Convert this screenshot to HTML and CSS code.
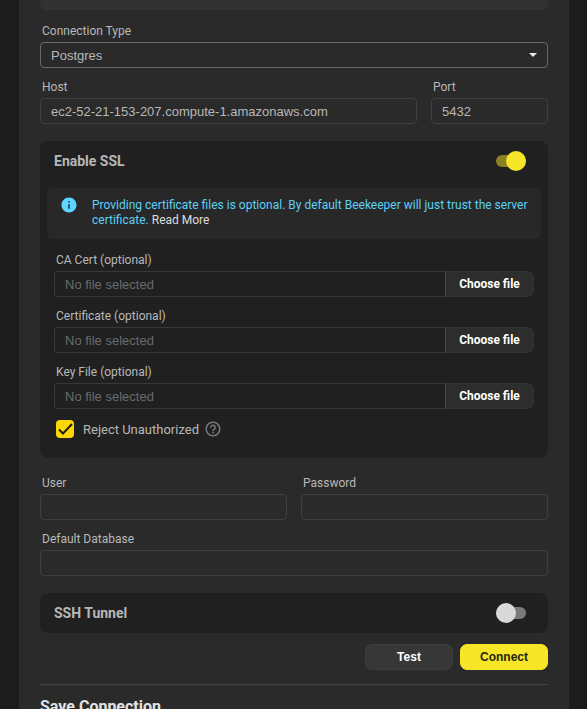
FILE: index.html
```html
<!DOCTYPE html>
<html lang="en">
<head>
<meta charset="utf-8">
<meta name="viewport" content="width=device-width, initial-scale=1">
<title>Connection</title>
<link rel="stylesheet" href="styles.css">
</head>
<body>
<main class="panel">
  <div class="notice"></div>
  <form class="form">
    <div class="field">
      <label for="type">Connection Type</label>
      <div class="select">
        <select id="type" class="control"><option>Postgres</option></select>
      </div>
    </div>
    <div class="row row-host">
      <div class="field">
        <label for="host">Host</label>
        <input id="host" class="control" type="text" value="ec2-52-21-153-207.compute-1.amazonaws.com">
      </div>
      <div class="field">
        <label for="port">Port</label>
        <input id="port" class="control" type="text" value="5432">
      </div>
    </div>

    <section class="group">
      <div class="group-head">
        <label for="ssl">Enable SSL</label>
        <input id="ssl" class="switch" type="checkbox" checked>
      </div>
      <div class="alert">
        <svg class="alert-icon" viewBox="0 0 24 24" aria-hidden="true"><path d="M12 2C6.48 2 2 6.48 2 12s4.480 10 10 10 10-4.480 10-10S17.520 2 12 2zm1 15h-2v-6h2v6zm0-8h-2V7h2v2z"/></svg>
        <p>Providing certificate files is optional. By default Beekeeper will just trust the server certificate. <a href="#">Read More</a></p>
      </div>
      <div class="group-body">
        <div class="files">
          <div class="field">
            <label for="ca">CA Cert (optional)</label>
            <div class="file">
              <input id="ca" class="control" type="text" placeholder="No file selected" readonly>
              <button type="button">Choose file</button>
            </div>
          </div>
          <div class="field">
            <label for="cert">Certificate (optional)</label>
            <div class="file">
              <input id="cert" class="control" type="text" placeholder="No file selected" readonly>
              <button type="button">Choose file</button>
            </div>
          </div>
          <div class="field">
            <label for="key">Key File (optional)</label>
            <div class="file">
              <input id="key" class="control" type="text" placeholder="No file selected" readonly>
              <button type="button">Choose file</button>
            </div>
          </div>
        </div>
        <div class="check">
          <span class="tick">
            <input id="reject" type="checkbox" checked>
            <svg viewBox="0 0 18 18" aria-hidden="true"><path d="M3 9.500L7 13.500L16 4"/></svg>
          </span>
          <label for="reject">Reject Unauthorized</label>
          <svg class="help" viewBox="0 0 24 24" aria-hidden="true"><path d="M11 18h2v-2h-2v2zm1-16C6.480 2 2 6.480 2 12s4.480 10 10 10 10-4.480 10-10S17.520 2 12 2zm0 18c-4.410 0-8-3.590-8-8s3.590-8 8-8 8 3.590 8 8-3.590 8-8 8zm0-14c-2.210 0-4 1.790-4 4h2c0-1.100.9-2 2-2s2 .9 2 2c0 2-3 1.750-3 5h2c0-2.250 3-2.500 3-5 0-2.210-1.790-4-4-4z"/></svg>
        </div>
      </div>
    </section>

    <div class="row">
      <div class="field">
        <label for="user">User</label>
        <input id="user" class="control" type="text">
      </div>
      <div class="field">
        <label for="password">Password</label>
        <input id="password" class="control" type="password">
      </div>
    </div>
    <div class="field">
      <label for="database">Default Database</label>
      <input id="database" class="control" type="text">
    </div>

    <section class="group">
      <div class="group-head">
        <label for="ssh">SSH Tunnel</label>
        <input id="ssh" class="switch" type="checkbox">
      </div>
    </section>
  </form>
  <div class="actions">
    <button type="button" class="btn">Test</button>
    <button type="button" class="btn btn-primary">Connect</button>
  </div>
  <hr>
  <h3>Save Connection</h3>
</main>
</body>
</html>
```
FILE: styles.css
```css
* {
  box-sizing: border-box;
}

html {
  height: 100%;
  overflow: hidden;
}

body {
  margin: 0;
  padding: 0 18px 0 19px;
  background: #1c1c1c;
  color: #b8b8b8;
  font-family: Roboto, "Liberation Sans", sans-serif;
  font-size: 12px;
}

.panel {
  max-width: 720px;
  margin: 0 auto;
  padding: 0 21px 24px;
  background: #2a2a2a;
}

.notice {
  height: 10px;
  margin-bottom: 14px;
  border-radius: 0 0 7px 7px;
  background: #323232;
}

.form,
.files {
  display: flex;
  flex-direction: column;
  gap: 12px;
}

.field {
  display: flex;
  flex-direction: column;
  flex: 1;
  min-width: 0;
}

.field > label {
  height: 18px;
  padding-left: 2px;
  line-height: 14px;
}

.row {
  display: grid;
  grid-template-columns: 1fr 1fr;
  gap: 14px;
}

.row-host {
  grid-template-columns: 377fr 117fr;
}

.control {
  width: 100%;
  height: 26px;
  margin: 0;
  padding: 0 10px;
  border: 1px solid #3f3f3f;
  border-radius: 4px;
  outline: 0;
  background: transparent;
  color: #b8b8b8;
  font-family: "Liberation Sans", Arial, sans-serif;
  font-size: 13px;
}

.control::placeholder {
  color: #6b6b6b;
  opacity: 1;
}

.select {
  position: relative;
}

.select .control {
  display: block;
  appearance: none;
  border-color: #6a6a6a;
}

.select::after {
  content: "";
  position: absolute;
  top: 11px;
  right: 11px;
  border: 4px solid transparent;
  border-top-color: #eaeaea;
  border-bottom: 0;
  pointer-events: none;
}

.group {
  margin: 5px 0 6px;
  border-radius: 8px;
  background: #202020;
}

.group:last-child {
  margin-bottom: 0;
}

.group-head {
  display: flex;
  align-items: center;
  justify-content: space-between;
  height: 40px;
  padding: 0 22px 0 14px;
  font-size: 14px;
  font-weight: 700;
}

.switch {
  appearance: none;
  display: flex;
  align-items: center;
  width: 30px;
  height: 12px;
  margin: 0;
  border-radius: 6px;
  background: #7a7a7a;
}

.switch::before {
  content: "";
  flex: none;
  width: 20px;
  height: 20px;
  border-radius: 50%;
  background: #d9d9d9;
}

.switch:checked {
  justify-content: flex-end;
  background: #8b8224;
}

.switch:checked::before {
  background: #f7e528;
}

.alert {
  display: flex;
  gap: 14px;
  margin: 7px 7px 14px;
  padding: 8px 10px 11px 13px;
  border-radius: 6px;
  background: #282828;
  color: #5cd0f7;
}

.alert-icon {
  flex: none;
  width: 18px;
  height: 18px;
  fill: #5cd5ff;
}

.alert p {
  margin: 2px 0 0;
  line-height: 15px;
}

.alert a {
  color: #dedede;
  text-decoration: none;
}

.group-body {
  padding: 0 14px 20px;
}

.file {
  display: flex;
}

.file .control {
  flex: 1;
  min-width: 0;
  border-color: #383838;
  border-right: 0;
  border-radius: 4px 0 0 4px;
}

.file button {
  width: 89px;
  height: 26px;
  padding: 0;
  border: 1px solid #333333;
  border-left-color: #484848;
  border-radius: 0 7px 7px 0;
  background: #2d2d2d;
  color: #ffffff;
  font: 700 12px Roboto, "Liberation Sans", sans-serif;
}

.check {
  display: flex;
  align-items: center;
  height: 18px;
  margin-top: 11px;
  padding-left: 2px;
  font-size: 13px;
}

.tick {
  display: grid;
  width: 18px;
  height: 18px;
  margin-right: 9px;
}

.tick input,
.tick svg {
  grid-area: 1 / 1;
  width: 18px;
  height: 18px;
  margin: 0;
}

.tick input {
  appearance: none;
  border-radius: 4px;
  background: #fad800;
}

.tick svg {
  fill: none;
  stroke: #202020;
  stroke-width: 2;
  pointer-events: none;
}

.help {
  width: 18px;
  height: 18px;
  margin-left: 5px;
  fill: #797979;
}

.actions {
  display: flex;
  justify-content: flex-end;
  gap: 7px;
  margin-top: 11px;
}

.btn {
  width: 88px;
  height: 26px;
  padding: 0;
  border: 1px solid #3d3d3d;
  border-radius: 7px;
  background: #373737;
  color: #ffffff;
  font: 700 12px "Liberation Sans", Arial, sans-serif;
}

.btn-primary {
  border-color: #f7e528;
  background: #f7e528;
  color: #28260f;
}

hr {
  height: 1px;
  margin: 14px 0 12px;
  border: 0;
  background: #434343;
}

h3 {
  margin: 0;
  color: #e2e2e2;
  font-size: 16px;
  font-weight: 700;
  line-height: 20px;
}
```
